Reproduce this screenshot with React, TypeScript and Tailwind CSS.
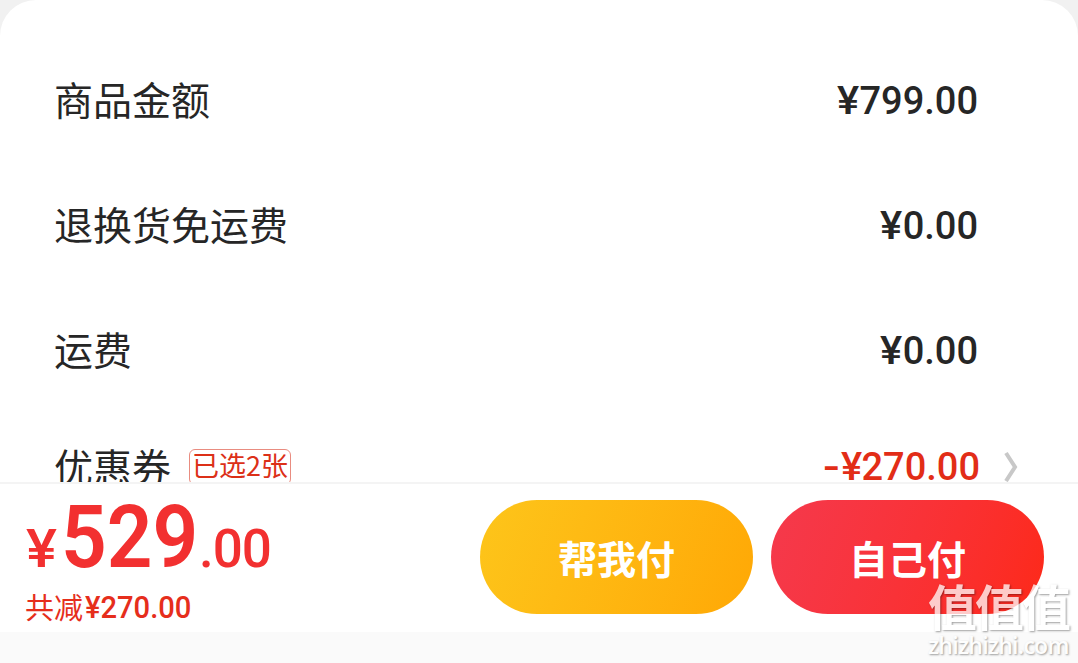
import React from "react"

interface PriceRowProps {
  label: string
  amount: string
}

const PriceRow: React.FC<PriceRowProps> = ({ label, amount }) => (
  <div className="flex h-[125px] items-center justify-between pl-[54px] pr-[100px] text-[#262626]">
    <span className="pb-[5px] text-[39px] leading-none">{label}</span>
    <span className="flex items-center font-['Roboto'] text-[38px] font-medium leading-none">
      <span className="origin-right scale-x-110">{amount[0]}</span>
      <span>{amount.slice(1)}</span>
    </span>
  </div>
)

const CouponRow = () => (
  <div className="flex h-[107px] items-center pl-[54px] pr-[59px]">
    <span className="pb-[3px] text-[39px] leading-none text-[#262626]">优惠券</span>
    <span className="ml-[18px] flex h-[36px] w-[102px] items-center justify-center rounded-[6px] border border-[#e98c80] pb-[4px] text-[27px] leading-none text-[#dc3018]">
      已选2张
    </span>
    <span className="ml-auto flex font-['Roboto'] text-[38px] font-medium leading-none text-[#e22d17]">
      <span className="origin-right scale-x-130">-</span>
      <span className="ml-[2px] mr-[-1px] origin-right scale-x-105">¥</span>
      <span>270.00</span>
    </span>
    <svg className="ml-[24px] h-[32px] w-[15px]" viewBox="0 0 15 32" fill="none" stroke="#c8c8c8" strokeWidth="4">
      <path d="M2 2 L11 16 L2 30" />
    </svg>
  </div>
)

const Total = () => (
  <div className="w-[455px] shrink-0 pl-[25px] text-[#f23030]">
    <div className="flex h-[96px] items-baseline pt-[9px] font-['Roboto'] font-medium leading-none">
      <span className="w-[36px] origin-left translate-x-[1px] scale-x-110 text-[53px]">¥</span>
      <span className="w-[138px] origin-left scale-x-91 text-[88px] font-semibold">529</span>
      <span className="text-[53px] tracking-[-1px]">.00</span>
    </div>
    <div className="flex items-center pt-[9px] leading-none text-[#e62e1c]">
      <span className="text-[29px]">共减</span>
      <span className="ml-[2px] origin-left scale-x-94 pt-[3px] font-['Roboto'] text-[31px] font-medium">¥270.00</span>
    </div>
  </div>
)

const Watermark = () => (
  <div className="absolute bottom-[3px] right-[8px] w-[142px] whitespace-nowrap text-white opacity-75 [text-shadow:1px_1px_2px_rgba(0,0,0,0.5)]">
    <div className="text-[49px] font-bold leading-[50px] tracking-[-2px]">值值值</div>
    <div className="font-['Open_Sans'] text-[23px] font-semibold leading-[30px] tracking-[-0.7px]">zhizhizhi.com</div>
  </div>
)

export default function App() {
  const rows = [
    { label: "商品金额", amount: "¥799.00" },
    { label: "退换货免运费", amount: "¥0.00" },
    { label: "运费", amount: "¥0.00" },
  ]

  return (
    <main className="relative h-[663px] w-[1078px] overflow-hidden bg-[#f1f1f1] font-['Noto_Sans_CJK_SC',sans-serif]">
      <section className="h-[482px] overflow-hidden rounded-t-[36px] bg-white pt-[38px]">
        {rows.map((row) => (
          <PriceRow key={row.label} {...row} />
        ))}
        <CouponRow />
      </section>
      <footer className="flex h-[150px] border-t-2 border-[#f4f4f4] bg-white">
        <Total />
        <div className="flex gap-[18px] pl-[25px] pt-[16px] text-[39px] font-bold leading-none text-white">
          <button className="h-[114px] w-[273px] rounded-full bg-linear-110 from-[#fdc51a] to-[#ffa805]">帮我付</button>
          <button className="h-[114px] w-[273px] rounded-full bg-linear-110 from-[#f5394c] to-[#fd2917]">自己付</button>
        </div>
      </footer>
      <div className="h-[31px] bg-[#fafafa]" />
      <Watermark />
    </main>
  )
}
